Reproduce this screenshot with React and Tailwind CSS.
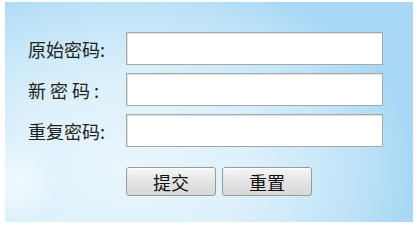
import React from "react";

const font = { fontFamily: '"Noto Sans CJK SC", "Microsoft YaHei", sans-serif' };

function Row({ label }) {
  return (
    <div className="flex items-center h-[33px]">
      <div className="w-[98px] text-[18px] leading-none text-[#222] whitespace-pre">{label}</div>
      <input
        type="password"
        className="w-[257px] h-[33px] bg-white border border-[#a8a8a8] shadow-[inset_1px_1px_0_#e2e2e2] outline-none"
      />
    </div>
  );
}

function Btn({ children }) {
  return (
    <button className="w-[90px] h-[29px] rounded-[3px] border border-[#9a9a9a] bg-[linear-gradient(#f6f6f6,#e4e4e4_50%,#d8d8d8)] text-[18px] leading-none text-[#111] shadow-[inset_0_1px_0_#fff]">
      {children}
    </button>
  );
}

export default function App() {
  return (
    <div className="w-[417px] h-[231px] bg-white pt-[2px] pl-[5px]" style={font}>
      <div className="relative w-[408px] h-[220px] overflow-hidden bg-[radial-gradient(ellipse_70%_90%_at_30%_75%,#eaf5fc_0%,#dcf0fb_45%,#bfe3f8_80%,#a8d8f5_100%)] pt-[30px] pl-[23px]">
        <div className="absolute left-[-20px] top-[150px] w-[60px] h-[60px] rounded-full bg-white/50 blur-[12px]" />
        <div className="relative flex flex-col gap-[8px]">
          <Row label="原始密码:" />
          <Row label="新 密 码 :" />
          <Row label="重复密码:" />
        </div>
        <div className="relative flex gap-[6px] mt-[20px] ml-[98px]">
          <Btn>提交</Btn>
          <Btn>重置</Btn>
        </div>
      </div>
    </div>
  );
}
